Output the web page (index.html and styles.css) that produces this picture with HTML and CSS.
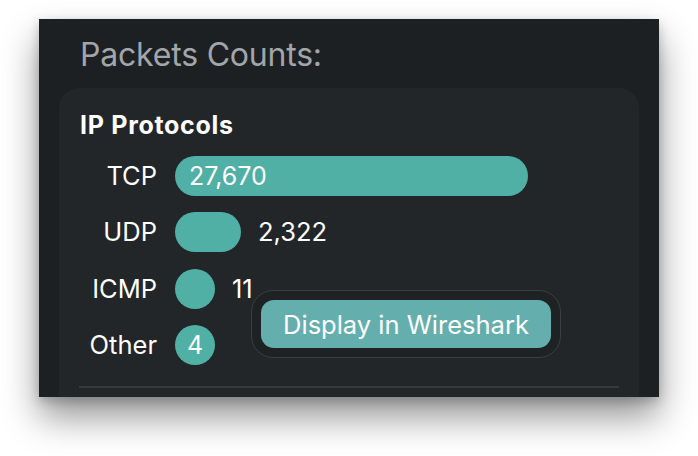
FILE: index.html
```html
<!DOCTYPE html>
<html>
<head>
<meta charset="utf-8">
<link rel="stylesheet" href="styles.css">
</head>
<body>
<div class="stage">
  <div class="window">
    <h1 class="title">Packets Counts:</h1>
    <section class="card">
      <h2 class="card-title">IP Protocols</h2>
      <div class="chart">
        <div class="label">TCP</div>
        <div class="bar-cell"><div class="bar" style="width:353px"><span class="bar-value">27,670</span></div></div>
        <div class="label">UDP</div>
        <div class="bar-cell"><div class="bar" style="width:66px"></div><span class="value">2,322</span></div>
        <div class="label">ICMP</div>
        <div class="bar-cell"><div class="bar" style="width:40px"></div><span class="value">11</span></div>
        <div class="label">Other</div>
        <div class="bar-cell"><div class="bar bar-center" style="width:40px"><span class="bar-value">4</span></div></div>
      </div>
      <div class="divider"></div>
      <div class="popover">
        <button class="action">Display in Wireshark</button>
      </div>
    </section>
  </div>
</div>
</body>
</html>
```
FILE: styles.css
```css
html, body {
  margin: 0;
  padding: 0;
  background: #ffffff;
}
body {
  font-family: Inter, "Noto Sans", sans-serif;
  color: #ffffff;
}
.stage {
  padding: 19px 0 0 39px;
  height: 456px;
  box-sizing: border-box;
  overflow: hidden;
}
.window {
  width: 620px;
  height: 378px;
  background: #1d2023;
  box-shadow: 0 20px 34px rgba(0, 0, 0, 0.42), 0 4px 10px rgba(0, 0, 0, 0.2);
  overflow: hidden;
  box-sizing: border-box;
  padding: 16px 20px 0 20px;
}
.title {
  margin: 0 0 0 21px;
  font-size: 32px;
  line-height: 40px;
  font-weight: 400;
  color: #a2a6aa;
  letter-spacing: -0.2px;
}
.card {
  position: relative;
  margin-top: 13px;
  height: 320px;
  background: #232629;
  border-radius: 20px 20px 0 0;
  padding: 22px 20px 0 20px;
  box-sizing: border-box;
}
.card-title {
  margin: 0 0 0 1px;
  font-size: 25px;
  line-height: 30px;
  font-weight: 700;
  letter-spacing: 0.7px;
}
.chart {
  margin-top: 16px;
  display: grid;
  grid-template-columns: 78px 1fr;
  column-gap: 18px;
  row-gap: 16.3px;
  align-items: center;
}
.label {
  text-align: right;
  font-size: 25.5px;
  line-height: 40px;
}
.bar-cell {
  display: flex;
  align-items: center;
  gap: 17px;
  height: 40px;
}
.bar {
  height: 40px;
  border-radius: 20px;
  background: #50b0a5;
  display: flex;
  align-items: center;
  box-sizing: border-box;
  padding-left: 14px;
  flex: none;
}
.bar-center {
  padding-left: 0;
  justify-content: center;
}
.bar-value {
  font-size: 25px;
  line-height: 40px;
}
.value {
  font-size: 25.5px;
  line-height: 40px;
}
.divider {
  margin-top: 21px;
  height: 2px;
  background: #34383b;
}
.popover {
  position: absolute;
  left: 192px;
  top: 202px;
  padding: 9px;
  border: 1.5px solid #3c3f42;
  border-radius: 22px;
  background: #1f2225;
}
.action {
  display: block;
  width: 290px;
  height: 48px;
  border: none;
  border-radius: 13px;
  background: #64afae;
  color: #ffffff;
  font-family: Inter, "Noto Sans", sans-serif;
  font-size: 25.5px;
  padding: 0;
  text-align: center;
}
```
